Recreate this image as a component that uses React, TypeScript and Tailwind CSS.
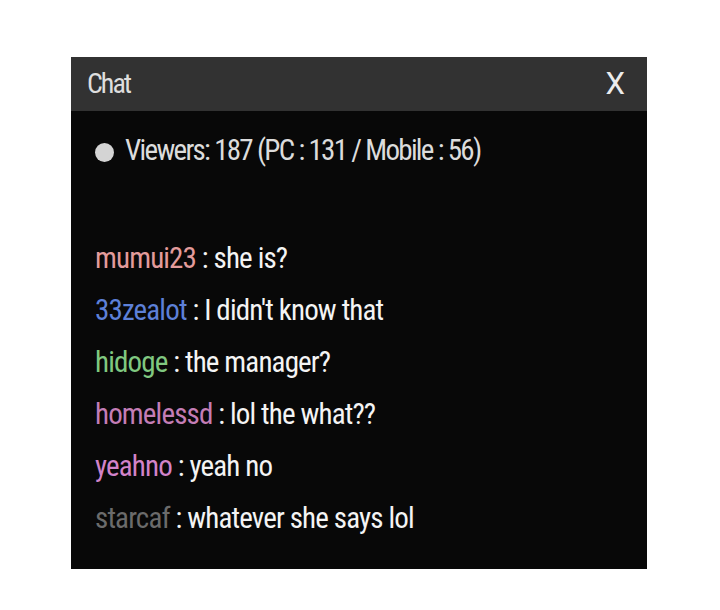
import React from "react";

const messages = [
  { user: "mumui23", color: "text-[#e39b9b]", text: "she is?" },
  { user: "33zealot", color: "text-[#5d80d8]", text: "I didn't know that" },
  { user: "hidoge", color: "text-[#80c880]", text: "the manager?" },
  { user: "homelessd", color: "text-[#c47db6]", text: "lol the what??" },
  { user: "yeahno", color: "text-[#d283c9]", text: "yeah no" },
  { user: "starcaf", color: "text-[#6b6b6b]", text: "whatever she says lol" },
];

export default function App() {
  return (
    <div
      className="w-[720px] h-[610px] bg-white pt-[57px] pl-[71px] font-stretch-condensed"
      style={{ fontFamily: 'Roboto, "DejaVu Sans Condensed", sans-serif' }}
    >
      <div className="w-[576px] h-[512px] bg-[#080808] flex flex-col">
        <div className="h-[54px] bg-[#323232] flex items-center justify-between pl-4 pr-[22px] text-[28px] tracking-[-2px] text-[#dedede] font-[430]">
          <span>Chat</span>
          <span className="text-[31px] tracking-normal text-[#ececec] font-stretch-normal font-normal">X</span>
        </div>
        <div className="pt-[20px] pl-[24px]">
          <div className="flex items-center h-[40px] text-[29px] tracking-[-1.7px] text-[#dcdcdc] font-[430]">
            <span className="w-[19px] h-[19px] rounded-full bg-[#d4d4d4] mr-[11px] mt-[2px]" />
            <span>Viewers: 187 (PC : 131 / Mobile : 56)</span>
          </div>
          <div className="mt-[61px] flex flex-col text-[29px] leading-[52px] tracking-[-0.85px] font-[430]">
            {messages.map((m) => (
              <div key={m.user} className="whitespace-pre">
                <span className={m.color}>{m.user}</span>
                <span className="text-[#f4f4f4]">{" : " + m.text}</span>
              </div>
            ))}
          </div>
        </div>
      </div>
    </div>
  );
}
